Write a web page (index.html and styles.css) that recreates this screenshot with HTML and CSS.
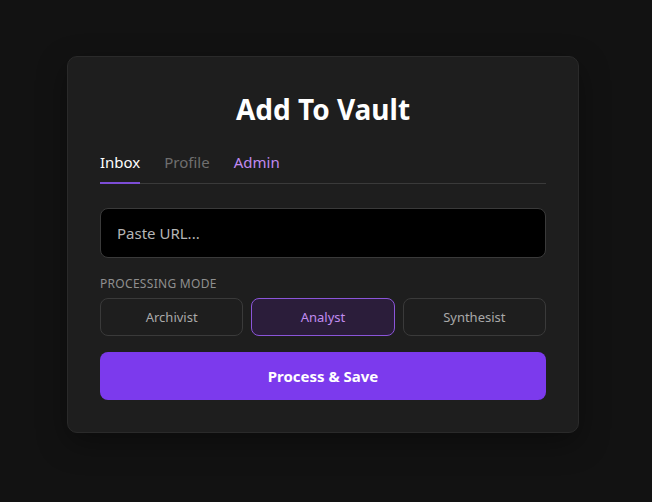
FILE: index.html
```html
<!DOCTYPE html>
<html lang="en">
<head>
<meta charset="utf-8">
<title>Add To Vault</title>
<link rel="stylesheet" href="styles.css">
</head>
<body>
<main class="page">
  <section class="card">
    <h1 class="title">Add To Vault</h1>
    <nav class="tabs">
      <span class="tab tab-active">Inbox</span>
      <span class="tab tab-muted">Profile</span>
      <span class="tab tab-admin">Admin</span>
    </nav>
    <input class="url-input" type="text" placeholder="Paste URL...">
    <div class="mode-label">PROCESSING MODE</div>
    <div class="modes">
      <button class="mode">Archivist</button>
      <button class="mode mode-active">Analyst</button>
      <button class="mode">Synthesist</button>
    </div>
    <button class="submit">Process &amp; Save</button>
  </section>
</main>
</body>
</html>
```

FILE: styles.css
```css
* { box-sizing: border-box; }
html, body {
  margin: 0;
  padding: 0;
  background: #121212;
  font-family: "Noto Sans", "Open Sans", sans-serif;
  color: #e5e5e5;
}
.page {
  display: flex;
  justify-content: center;
  align-items: flex-start;
  padding: 56px 6px 0 0;
  min-height: 502px;
}
.card {
  width: 512px;
  background: #1e1e1e;
  border: 1px solid #2a2a2a;
  border-radius: 10px;
  padding: 28px 32px 32px;
  display: flex;
  flex-direction: column;
  box-shadow: 0 10px 30px rgba(0,0,0,0.35);
}
.title {
  margin: 0;
  text-align: center;
  font-size: 28px;
  font-weight: 700;
  color: #ffffff;
  line-height: 48px;
}
.tabs {
  display: flex;
  gap: 24px;
  margin-top: 19px;
  border-bottom: 1px solid #3a3a3a;
}
.tab {
  font-size: 15px;
  line-height: 20px;
  padding-bottom: 10px;
  margin-bottom: -1px;
  border-bottom: 2px solid transparent;
}
.tab-active { color: #ffffff; border-bottom-color: #7c4dd6; }
.tab-muted { color: #6f6f6f; }
.tab-admin { color: #c08af0; }
.url-input {
  margin-top: 24px;
  height: 50px;
  background: #000000;
  border: 1px solid #3a3a3a;
  border-radius: 8px;
  padding: 0 16px;
  font-family: inherit;
  font-size: 15px;
  color: #e5e5e5;
  outline: none;
}
.url-input::placeholder { color: #b5b5b5; }
.mode-label {
  margin-top: 18px;
  font-size: 12px;
  letter-spacing: 0.3px;
  color: #8f8f8f;
  line-height: 16px;
}
.modes {
  display: grid;
  grid-template-columns: 1fr 1fr 1fr;
  gap: 8px;
  margin-top: 6px;
}
.mode {
  height: 38px;
  background: #1e1e1e;
  border: 1px solid #3a3a3a;
  border-radius: 8px;
  font-family: inherit;
  font-size: 13px;
  color: #a9a9a9;
}
.mode-active {
  background: #2b1d3a;
  border-color: #8b55d9;
  color: #c18cf0;
}
.submit {
  margin-top: 16px;
  height: 48px;
  background: #7c3aed;
  border: none;
  border-radius: 8px;
  font-family: inherit;
  font-size: 15px;
  font-weight: 700;
  color: #ffffff;
}
```
